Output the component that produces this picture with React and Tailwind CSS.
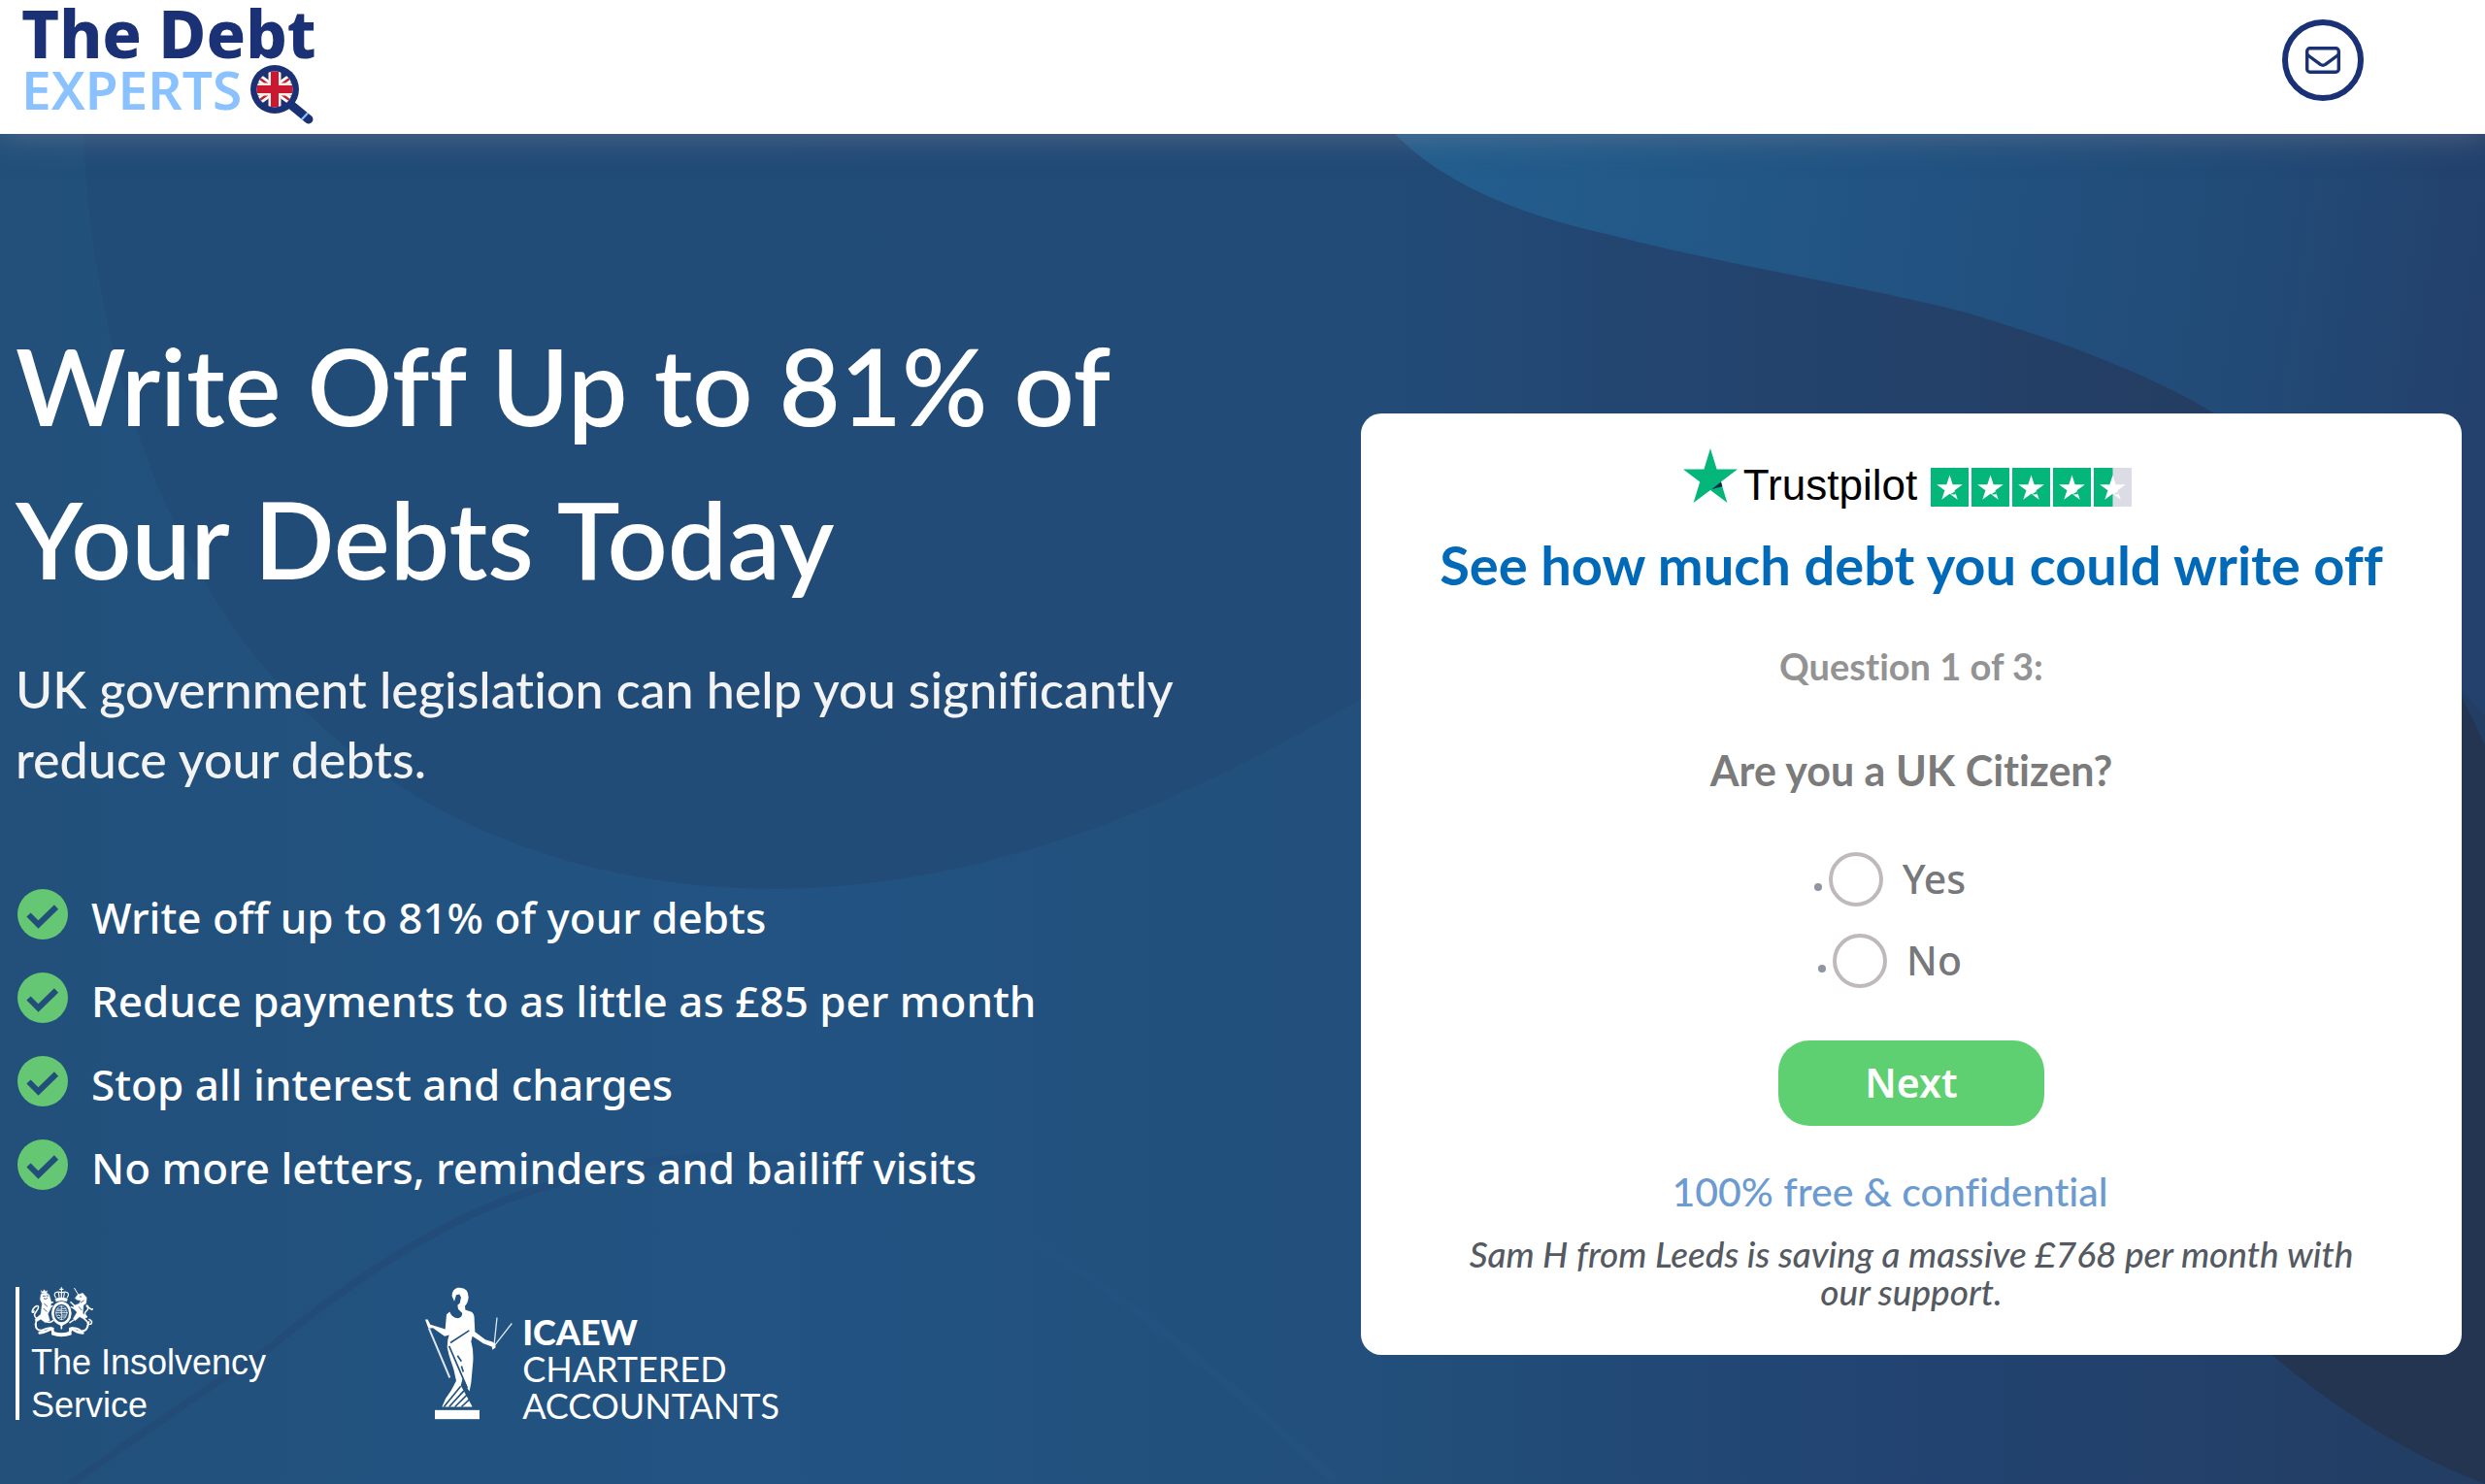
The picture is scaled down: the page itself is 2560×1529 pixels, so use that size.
const LATO = "font-['Lato','Liberation_Sans',sans-serif]"
const NOTO = "font-['Noto_Sans','Open_Sans',sans-serif]"
const ARIAL = "font-['Liberation_Sans',Arial,sans-serif]"

const BENEFITS = [
  'Write off up to 81% of your debts',
  'Reduce payments to as little as £85 per month',
  'Stop all interest and charges',
  'No more letters, reminders and bailiff visits',
]

function Magnifier() {
  return (
    <svg viewBox="0 0 68 64" className="w-[68px] h-16 shrink-0" aria-hidden="true">
      <defs>
        <clipPath id="lens"><circle cx="26" cy="26" r="18.5" /></clipPath>
      </defs>
      <path d="M44 43L61 57" stroke="#1b3176" strokeWidth="9" strokeLinecap="round" />
      <path d="M53.5 57.5L60 50.5" stroke="#89c2ff" strokeWidth="2.2" />
      <circle cx="26" cy="26" r="25" fill="#1b3176" />
      <g clipPath="url(#lens)">
        <path d="M4 10L48 42M48 10L4 42" stroke="#fff" strokeWidth="8" />
        <path d="M4 10L26 26M48 42L26 26M48 10L26 26M4 42L26 26" stroke="#cb1832" strokeWidth="2.4" />
        <path d="M26 4V48M4 26H48" stroke="#f6efe2" strokeWidth="13" />
        <path d="M26 4V48M4 26H48" stroke="#cb1832" strokeWidth="8" />
      </g>
    </svg>
  )
}

function Logo() {
  return (
    <a href="#" className={`block text-[#1b3176] ${NOTO}`}>
      <span className="block font-extrabold text-[67px] leading-16">The Debt</span>
      <span className="flex items-start">
        <span className="text-[#89c2ff] font-semibold text-[55px] leading-13 mr-2">EXPERTS</span>
        <Magnifier />
      </span>
    </a>
  )
}

function CheckIcon() {
  return (
    <svg viewBox="0 0 52 52" className="w-13 h-13 shrink-0 mb-1.5" aria-hidden="true">
      <circle cx="26" cy="26" r="26" fill="#65c673" />
      <path d="M11.5 26.5L21.5 36.5L40 18.5" fill="none" stroke="#224f79" strokeWidth="6" />
    </svg>
  )
}

const STAR = '0,-1 .2245,-.309 .9511,-.309 .3633,.118 .5878,.809 0,.382 -.5878,.809 -.3633,.118 -.9511,-.309 -.2245,-.309'

function Trustpilot() {
  return (
    <div className="flex items-end justify-center h-15 pr-2" role="img" aria-label="Trustpilot rating, four and a half stars">
      <svg viewBox="0 0 56 56" className="w-14 h-14 self-start mr-1.5">
        <path d="M28 0L34.6 21.4H56L38.8 34.6L45.4 56L28 43L10.6 56L17.2 34.6L0 21.4H21.4Z" fill="#04b67a" />
        <path d="M40.4 39.3L39 34.6L29.5 42Z" fill="#10284a" />
      </svg>
      <span className={`text-[44px] leading-none text-black mr-3.5 ${ARIAL}`}>Trustpilot</span>
      <span className="flex gap-[3px]">
        {[1, 1, 1, 1, 0.5].map((fill, i) => (
          <svg key={i} viewBox="0 0 39 40" className="w-[39px] h-10">
            <rect width="39" height="40" fill="#dcdce6" />
            <rect width={39 * fill} height="40" fill="#04b67a" />
            <polygon points={STAR} transform="translate(19.5 21.5) scale(14)" fill="#fff" />
            <path d="M20 27.5L25 24.3L26 27.2Z" fill={fill === 1 ? '#04b67a' : '#dcdce6'} />
          </svg>
        ))}
      </span>
    </div>
  )
}

function RoyalArms() {
  return (
    <svg viewBox="96 80 192 156" className="w-16 h-[52px] shrink-0" fill="none" stroke="#fff" strokeWidth="5" strokeLinecap="round" strokeLinejoin="round" aria-hidden="true">
      {/* crown */}
      <path d="M190 82V94M185 87H195" strokeWidth="3.5" />
      <path d="M172 112C162 98 176 92 190 98C204 92 218 98 208 112M190 97V112M181 98L183 111M199 98L197 111" strokeWidth="3.5" />
      <path d="M172 116Q190 110 208 116L206 124Q190 119 174 124Z" fill="#fff" strokeWidth="2" />
      {/* shield and garter */}
      <ellipse cx="190" cy="161" rx="27" ry="32" strokeWidth="8" />
      <ellipse cx="190" cy="160" rx="17" ry="21" strokeWidth="2" />
      <path d="M190 139V181M173 160H207M177 149H188M177 154H188M193 147Q200 150 204 146M193 154Q199 157 204 153M193 167H204M193 173H202M177 168Q183 164 187 170M179 175H187" strokeWidth="2.5" />
      <path d="M183 193L190 200L197 193M190 198V208" strokeWidth="5" />
      {/* lion */}
      <path d="M127 91L132 95L136 88L141 94L146 91L144 99H129Z" fill="#fff" strokeWidth="1" />
      <path d="M127 102Q144 94 152 104L158 124L157 146L148 163L154 184L140 190L126 180L112 188L108 180L126 164L130 132L124 118Z" fill="#fff" strokeWidth="1" />
      <path d="M133 108H139M144 107H149M136 116Q141 120 146 115M137 132L146 140M135 147L144 156" stroke="#22517c" strokeWidth="2.5" />
      <path d="M150 130L163 127M150 145L162 139M114 178C98 166 112 158 117 148C124 133 108 137 101 151C97 160 104 162 105 154" strokeWidth="4.5" />
      <path d="M112 184L110 198M140 184Q152 195 164 184" />
      {/* unicorn */}
      <path d="M230 84L244 107" strokeWidth="3" />
      <path d="M240 104L256 99L268 113L266 131L258 136L256 162L270 172L260 180L246 172L232 184L226 178L238 158L226 146L228 138L244 132L250 122L238 120L232 115Z" fill="#fff" strokeWidth="1" />
      <path d="M247 110H251M250 128L259 122M244 142L252 151" stroke="#22517c" strokeWidth="2.5" />
      <path d="M230 138L219 127M232 148L220 142M268 172C254 158 270 156 272 147C276 136 262 134 270 142C280 144 284 154 286 148M228 182L216 190M262 180Q274 188 272 198M276 180Q288 186 281 195Q270 196 275 188" strokeWidth="4.5" />
      {/* motto ribbon */}
      <path d="M110 194Q110 216 130 214Q148 204 164 208L162 226Q190 236 218 226L216 208Q236 204 250 216Q270 218 272 196" strokeWidth="6" />
      <path d="M122 222Q146 218 158 208L166 222Q190 230 214 222L222 208Q236 220 256 222" strokeWidth="8" />
    </svg>
  )
}

function InsolvencyService() {
  return (
    <div className="flex flex-col border-l-4 border-white pl-3 h-[137px]">
      <RoyalArms />
      <p className={`text-[36px] leading-[44px] mt-1 ${ARIAL}`}>The Insolvency<br />Service</p>
    </div>
  )
}

function Icaew() {
  return (
    <div className="flex items-end">
      <svg viewBox="60 76 270 410" className="w-[90px] h-[137px] mr-2.5" fill="#fff" aria-hidden="true">
        <path d="M160 78Q194 74 194 108Q192 126 183 134L184 146L204 153Q213 160 212 178L214 214L246 238L268 245L276 252L278 262L268 270L266 260L240 250L206 228L202 244Q210 270 208 306L202 372L197 398L186 382L176 358L170 380L180 398L206 446H112Q122 418 140 396L156 366L148 330L134 288L128 262L130 238L134 224L120 228L84 202L70 204L60 176H68L76 192L96 198L122 206L126 160L136 152Q142 172 162 172Q176 168 174 156L162 144L160 132L167 126L171 108L166 98L156 100L150 120L143 104Q142 84 160 78Z" />
        <path d="M72 204L136 356" stroke="#fff" strokeWidth="6" opacity=".85" />
        <path d="M273 256L282 170M273 258L328 188" stroke="#fff" strokeWidth="4" opacity=".85" />
        <path d="M138 248L196 210M134 258L190 388M160 288L172 306M172 320L178 338M118 446L170 382M134 446L180 396M152 446L190 408M172 446L196 424" stroke="#22517f" strokeWidth="5" fill="none" />
        <rect x="90" y="456" width="138" height="28" />
      </svg>
      <p className={`text-[36px] leading-[38px] -mb-1 ${LATO}`}>
        <strong className="font-black">ICAEW</strong><br />CHARTERED<br />ACCOUNTANTS
      </p>
    </div>
  )
}

function HeroBackdrop() {
  return (
    <svg viewBox="0 0 2560 1391" preserveAspectRatio="none" className="absolute inset-0 w-full h-full" aria-hidden="true">
      <defs>
        <linearGradient id="base" x1="0" y1="0" x2="1" y2="0">
          <stop offset="0" stopColor="#22507b" />
          <stop offset=".3" stopColor="#225382" />
          <stop offset=".55" stopColor="#224f7b" />
          <stop offset=".75" stopColor="#224472" />
          <stop offset="1" stopColor="#233d63" />
        </linearGradient>
        <linearGradient id="blob" x1="0" y1="0" x2="1" y2="0">
          <stop offset="0" stopColor="#224c78" />
          <stop offset=".6" stopColor="#224b77" />
          <stop offset=".75" stopColor="#23446e" />
          <stop offset="1" stopColor="#243c61" />
        </linearGradient>
        <linearGradient id="light" gradientUnits="userSpaceOnUse" x1="1440" y1="0" x2="2560" y2="160">
          <stop offset="0" stopColor="#235f8f" />
          <stop offset=".5" stopColor="#225281" />
          <stop offset=".8" stopColor="#224a76" />
          <stop offset="1" stopColor="#23416c" />
        </linearGradient>
        <linearGradient id="arc" x1="0" y1="0" x2="1" y2="0">
          <stop offset="0" stopColor="#224b78" />
          <stop offset=".35" stopColor="#224b78" stopOpacity=".9" />
          <stop offset=".6" stopColor="#224f7d" stopOpacity=".2" />
          <stop offset="1" stopColor="#2a5f8e" stopOpacity=".15" />
        </linearGradient>
      </defs>
      <rect width="2560" height="1391" fill="url(#base)" />
      <path d="M86 0C90 170 150 420 290 570C420 710 600 778 800 778C1020 776 1220 690 1402 582L1900 400L2330 320V0Z" fill="url(#blob)" />
      <path d="M1437 0C1490 54 1570 84 1659 104C1790 138 1910 154 2029 185C2130 215 2220 250 2285 290L2560 600V0Z" fill="url(#light)" />
      <path d="M72 1391C160 1330 230 1280 270 1257C350 1190 460 1110 575 1081C700 1040 850 1045 971 1095C1110 1150 1260 1280 1376 1388" fill="none" stroke="url(#arc)" strokeWidth="8" />
      <path d="M2536 580L2560 630V1391C2480 1360 2400 1310 2341 1258C2200 1080 2300 700 2536 580Z" fill="#243551" />
    </svg>
  )
}

function Answer({ label, value }) {
  return (
    <label className={`flex items-center justify-center h-21 text-[41px] font-medium text-[#77787b] ${NOTO}`}>
      <span className="w-2 h-2 rounded-full bg-[#8f95a3] mt-4 mr-[7px]" />
      <input type="radio" name="citizen" value={value}
        className="appearance-none w-14 h-14 rounded-full border-4 border-[#bfb9bc] bg-white checked:bg-[#5fd071] mr-5" />
      {label}
    </label>
  )
}

function QuestionCard() {
  return (
    <form className="bg-white rounded-[21px] mt-72 pt-9 pb-[46px] text-center" onSubmit={e => e.preventDefault()}>
      <Trustpilot />
      <h2 className="mt-7 text-[56px] leading-16 font-bold text-[#0069b8]">See how much debt you could write off</h2>
      <p className="mt-12 text-[38px] leading-12 font-bold text-[#939393]">Question 1 of 3:</p>
      <fieldset>
        <legend className="w-full pt-14 pb-[42px] text-[43px] leading-14 font-bold text-[#7b7b7b]">Are you a UK Citizen?</legend>
        <div className="pr-11">
          <Answer label="Yes" value="yes" />
          <Answer label="No" value="no" />
        </div>
      </fieldset>
      <button type="submit" className={`mt-10 w-[274px] h-22 rounded-[32px] bg-[#5fd071] text-white text-[41px] font-semibold ${NOTO}`}>Next</button>
      <p className="mt-10 pr-11 text-[41px] leading-14 font-medium text-[#6c9bd1]">100% free &amp; confidential</p>
      <p className="mt-4 mx-auto max-w-[950px] text-[37px] leading-[39px] italic font-medium text-[#555a62]">
        Sam H from Leeds is saving a massive £768 per month with our support.
      </p>
    </form>
  )
}

export default function App() {
  return (
    <div className={`min-h-screen flex flex-col [font-variant-ligatures:none] ${LATO}`}>
      <header className="relative z-10 flex justify-between bg-white h-[138px] pl-[22px] pr-[125px] pt-0.5 shadow-[0_0_30px_rgba(150,140,150,0.5)]">
        <Logo />
        <a href="#contact" aria-label="Email us"
          className="flex items-center justify-center w-[84px] h-[84px] mt-[18px] rounded-full border-6 border-[#1b3176]">
          <svg viewBox="0 0 36 28" className="w-9 h-7" fill="none" stroke="#1b3176" strokeWidth="3.4" strokeLinejoin="round">
            <rect x="1.7" y="1.7" width="32.6" height="24.6" rx="3" />
            <path d="M2 8.5L15.4 18.4Q18 20 20.6 18.4L34 8.5" />
          </svg>
        </a>
      </header>

      <main className="relative grow grid grid-cols-[55%_45%] pl-4 pr-6 text-white">
        <HeroBackdrop />
        <section className="relative pt-45">
          <h1 className="text-[109px] leading-[158px] font-semibold">Write Off Up to 81% of<br />Your Debts Today</h1>
          <p className="mt-10 text-[52px] leading-[72px] font-medium text-[#f3f3f3]">
            UK government legislation can help you significantly<br />reduce your debts.
          </p>
          <ul className={`mt-21 text-[44px] leading-[86px] font-medium ${NOTO}`}>
            {BENEFITS.map(b => (
              <li key={b} className="flex items-center gap-6 pl-0.5">
                <CheckIcon />
                {b}
              </li>
            ))}
          </ul>
          <div className="mt-20 flex gap-41">
            <InsolvencyService />
            <Icaew />
          </div>
        </section>
        <section className="relative">
          <QuestionCard />
        </section>
      </main>
    </div>
  )
}
